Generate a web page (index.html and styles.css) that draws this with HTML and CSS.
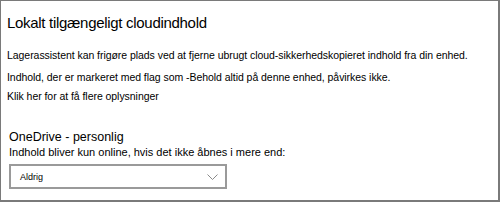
FILE: index.html
```html
<!DOCTYPE html>
<html lang="da">
<head>
<meta charset="UTF-8" />
<title>Lokalt tilgængeligt cloudindhold</title>
<link rel="stylesheet" href="styles.css">
</head>
<body>
  <div class="panel">
    <h1 class="title">Lokalt tilgængeligt cloudindhold</h1>
    <p class="line first">Lagerassistent kan frigøre plads ved at fjerne ubrugt cloud-sikkerhedskopieret indhold fra din enhed.</p>
    <p class="line">Indhold, der er markeret med flag som -Behold altid på denne enhed, påvirkes ikke.</p>
    <p class="line link">Klik her for at få flere oplysninger</p>

    <div class="account">
      <h2 class="account-name">OneDrive - personlig</h2>
      <p class="account-label">Indhold bliver kun online, hvis det ikke åbnes i mere end:</p>
      <div class="select">
        <span>Aldrig</span>
        <svg class="chevron" width="11" height="6" viewBox="0 0 11 6">
          <path d="M0.5 0.5 L5.5 5.5 L10.5 0.5" fill="none" stroke="#8a8a8a" stroke-width="1" />
        </svg>
      </div>
    </div>
  </div>
</body>
</html>
```

FILE: styles.css
```css
* {
  box-sizing: border-box;
  margin: 0;
  padding: 0;
}
body {
  background: #fff;
  color: #000;
  font-family: "Liberation Sans", Arial, sans-serif;
  width: 500px;
  height: 202px;
}
.panel {
  width: 500px;
  height: 202px;
  border: 1px solid #7a7a7a;
  border-right-width: 2px;
  border-bottom-width: 2px;
  padding: 13px 0 0 6px;
}
.title {
  font-size: 15px;
  font-weight: 400;
  letter-spacing: -0.3px;
  line-height: 18px;
  margin-bottom: 17px;
}
.line {
  font-size: 10.5px;
  letter-spacing: -0.05px;
  line-height: 13px;
  margin-bottom: 6px;
}
.line.first {
  margin-bottom: 9px;
}
.account {
  margin-top: 27px;
  padding-left: 2px;
}
.account-name {
  font-size: 12.5px;
  font-weight: 400;
  line-height: 15px;
}
.account-label {
  font-size: 11px;
  line-height: 14px;
  margin-bottom: 5px;
}
.select {
  width: 218px;
  height: 25px;
  border: 2px solid #9a9a9a;
  display: flex;
  align-items: center;
  justify-content: space-between;
  padding: 0 7px 0 9px;
  font-size: 9px;
}
```
